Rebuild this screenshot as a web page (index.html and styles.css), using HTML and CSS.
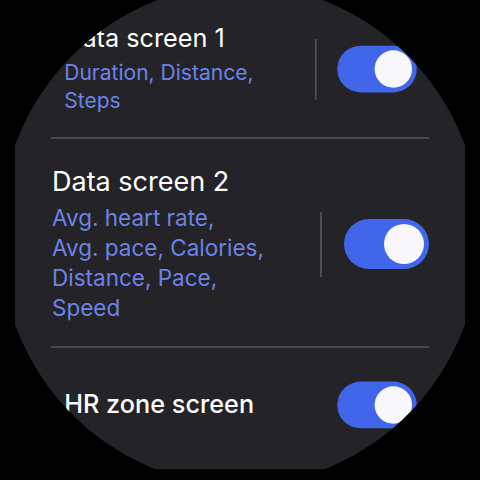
FILE: index.html
```html
<!DOCTYPE html>
<html lang="en">
<head>
  <meta charset="UTF-8" />
  <meta name="viewport" content="width=device-width, initial-scale=1.0" />
  <title>Exercise screens</title>
  <link rel="stylesheet" href="styles.css">
</head>
<body>
  <div class="watch">
    <div class="list">
      <div class="item edge first">
        <div class="text">
          <div class="title">Data screen 1</div>
          <div class="sub">Duration, Distance,<br>Steps</div>
        </div>
        <div class="sep"></div>
        <div class="toggle on"><span class="knob"></span></div>
      </div>

      <div class="divider"></div>

      <div class="item middle">
        <div class="text">
          <div class="title">Data screen 2</div>
          <div class="sub">Avg. heart rate,<br>Avg. pace, Calories,<br>Distance, Pace,<br>Speed</div>
        </div>
        <div class="sep"></div>
        <div class="toggle on"><span class="knob"></span></div>
      </div>

      <div class="divider"></div>

      <div class="item edge last">
        <div class="text">
          <div class="title bold">HR zone screen</div>
        </div>
        <div class="toggle on"><span class="knob"></span></div>
      </div>
    </div>
  </div>
</body>
</html>
```

FILE: styles.css
```css
* {
  margin: 0;
  padding: 0;
  box-sizing: border-box;
}

body {
  background: #000;
  font-family: Inter, Roboto, sans-serif;
  width: 480px;
  height: 480px;
  overflow: hidden;
}

/* round screen, cut flat by the panel edges */
.watch {
  margin: 0 15px;
  width: 450px;
  height: 469px;
  background: #242428;
  clip-path: ellipse(241px 250px at 225px 235px);
  overflow: hidden;
}

.list {
  padding: 1px 36px 0;
  display: flex;
  flex-direction: column;
}

.item {
  display: flex;
  align-items: center;
  padding: 0 0 0 1px;
}

.item.first { padding-top: 19px; padding-bottom: 19px; }
.item.middle { padding-top: 26px; padding-bottom: 23px; }
.item.last { padding-top: 32px; padding-bottom: 32px; }

/* items near the screen edge shrink, like the watch list does */
.item.edge {
  transform: scale(0.935);
}

.text {
  flex: 1;
}

.title {
  color: #fff;
  font-size: 27px;
  line-height: 34px;
  margin-bottom: 4px;
}

.title.bold {
  font-weight: 500;
  margin-bottom: 0;
}

.sub {
  color: #6d83e5;
  font-size: 22.5px;
  line-height: 30px;
  white-space: nowrap;
}

.sep {
  width: 2px;
  height: 65px;
  background: #4d4d52;
  margin-right: 22px;
}

.toggle {
  width: 85px;
  height: 50px;
  border-radius: 25px;
  background: #4166ea;
  display: flex;
  align-items: center;
  justify-content: flex-end;
  padding-right: 5px;
}

.knob {
  width: 40px;
  height: 40px;
  border-radius: 50%;
  background: #f7f7fc;
}

.divider {
  height: 2px;
  background: #48484d;
}
```
